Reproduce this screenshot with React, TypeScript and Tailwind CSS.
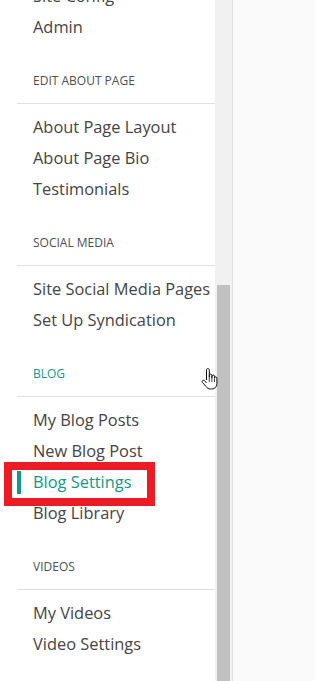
type Section = {
  title: string;
  items: string[];
  active?: boolean;
};

const sections: Section[] = [
  { title: "Edit About Page", items: ["About Page Layout", "About Page Bio", "Testimonials"] },
  { title: "Social Media", items: ["Site Social Media Pages", "Set Up Syndication"] },
  { title: "Blog", items: ["My Blog Posts", "New Blog Post", "Blog Settings", "Blog Library"], active: true },
  { title: "Videos", items: ["My Videos", "Video Settings"] },
];

function NavItem({ label, selected }: { label: string; selected?: boolean }) {
  return (
    <div className="relative h-[31px] pl-[33px] text-[16.4px] leading-[31px] whitespace-nowrap">
      {selected && (
        <>
          <div className="absolute left-[17px] top-[5px] h-[23px] w-[4px] bg-[#12998a]" />
          <div className="pointer-events-none absolute left-[4px] top-[-4px] h-[44px] w-[151px] border-[8px] border-[#ed1c24]" />
        </>
      )}
      <span className={selected ? "text-[#12998a]" : "text-[#454545]"}>{label}</span>
    </div>
  );
}

function HandCursor() {
  return (
    <svg width="20" height="24" viewBox="0 0 20 24" className="absolute left-[200px] top-[367px]">
      <path
        d="M6.5 13V3.2c0-1 .6-1.7 1.4-1.7s1.4.7 1.4 1.7V10.5V8.6c0-.9.6-1.5 1.3-1.5s1.3.6 1.3 1.5v2.3V9.4c0-.9.6-1.4 1.3-1.4s1.3.5 1.3 1.4v1.8c0-.8.5-1.3 1.2-1.3s1.2.5 1.2 1.3v5.3c0 3.3-2 5.5-5.2 5.5h-1.2c-2 0-3.2-.8-4.4-2.4L2.4 15.4c-.5-.8-.3-1.6.4-2 .7-.4 1.4-.2 2 .5L6.5 16"
        fill="#fff"
        stroke="#111"
        strokeWidth="1"
        strokeLinejoin="round"
      />
      <path d="M9.3 11v4M11.9 11v4M14.5 11.5v3.5" stroke="#111" strokeWidth="0.8" />
    </svg>
  );
}

export default function App() {
  return (
    <div className="relative flex h-[681px] w-[315px] overflow-hidden bg-[#fafafa] font-['Open_Sans',sans-serif]">
      <aside className="w-[215px] shrink-0 bg-white">
        <div className="-mt-[20px]">
          <NavItem label="Site Config" />
          <NavItem label="Admin" />
        </div>
        {sections.map((section) => (
          <div key={section.title}>
            <div
              className={`pl-[33px] pt-[31px] text-[12px] leading-[16px] uppercase mb-[14px] ${
                section.active ? "text-[#12998a]" : "text-[#4f4f4f]"
              }`}
            >
              {section.title}
            </div>
            <div className="ml-[17px] border-t border-[#e0e0e0]" />
            <div className="pt-[7px]">
              {section.items.map((item) => (
                <NavItem key={item} label={item} selected={item === "Blog Settings"} />
              ))}
            </div>
          </div>
        ))}
      </aside>
      <div className="flex w-[17px] shrink-0 flex-col bg-[#f1f1f1]">
        <div className="h-[285px]" />
        <div className="mx-[2px] flex-1 bg-[#c1c1c1]" />
      </div>
      <div className="w-px shrink-0 bg-[#dcdfe4]" />
      <main className="flex-1 bg-[#fafafa]" />
      <HandCursor />
    </div>
  );
}
